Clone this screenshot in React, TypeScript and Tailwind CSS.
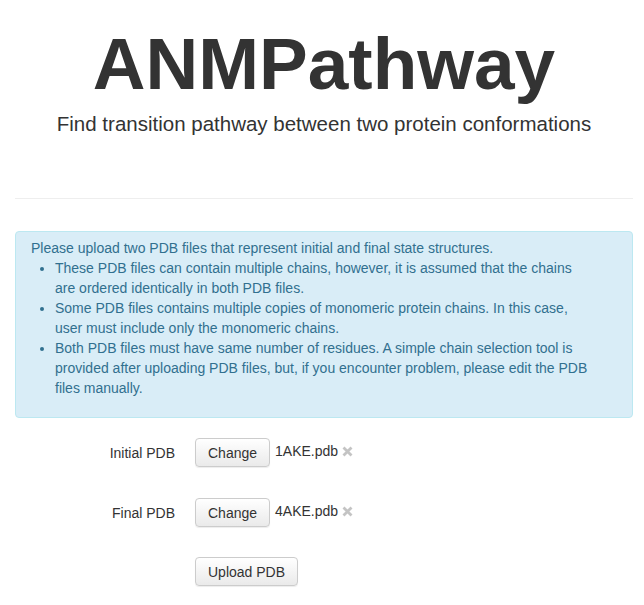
import React from "react";

function RemoveIcon() {
  return (
    <svg width="11" height="11" viewBox="0 0 11 11" className="shrink-0">
      <path d="M1.5 1.5 L9.5 9.5 M9.5 1.5 L1.5 9.5" stroke="#c4c4c4" strokeWidth="2.8" strokeLinecap="butt" />
    </svg>
  );
}

function Btn({ children }: { children: React.ReactNode }) {
  return (
    <button
      type="button"
      className="border border-[#cccccc] rounded-[4px] bg-gradient-to-b from-[#ffffff] to-[#eaeaea] px-[12px] pt-[4px] pb-[3px] text-[14px] leading-[20px] text-[#333333] shadow-[0_1px_1px_rgba(0,0,0,0.075)]"
    >
      {children}
    </button>
  );
}

function FileRow({ label, file }: { label: string; file: string }) {
  return (
    <div className="flex items-start">
      <div className="w-[160px] pt-[5px] text-right text-[14px] leading-[20px] text-[#333333]">{label}</div>
      <div className="ml-[20px] flex items-start">
        <Btn>Change</Btn>
        <span className="ml-[5px] pt-[3px] text-[14px] leading-[20px] text-[#333333]">{file}</span>
        <span className="ml-[4px] pt-[8px]">
          <RemoveIcon />
        </span>
      </div>
    </div>
  );
}

export default function App() {
  return (
    <div
      className="min-h-[605px] w-[644px] bg-white pl-[15px] pr-[11px] text-[#333333]"
      style={{ fontFamily: '"Liberation Sans", Arial, sans-serif' }}
    >
      <div className="pt-[28px] text-center">
        <h1 className="text-[73px] font-bold leading-[72px] text-[#333333]">ANMPathway</h1>
        <p className="mt-[9px] text-[20.5px] leading-[30px] text-[#333333]">
          Find transition pathway between two protein conformations
        </p>
      </div>
      <div className="mt-[59px] border-t border-[#eeeeee]" />
      <div className="mt-[32px] rounded-[4px] border border-[#bce8f1] bg-[#d9edf7] px-[15px] pt-[6px] pb-[19px] text-[14px] leading-[20px] text-[#31708f]">
        <div>Please upload two PDB files that represent initial and final state structures.</div>
        <ul className="list-disc pl-[24px]">
          <li>
            These PDB files can contain multiple chains, however, it is assumed that the chains
            <br />
            are ordered identically in both PDB files.
          </li>
          <li>
            Some PDB files contains multiple copies of monomeric protein chains. In this case,
            <br />
            user must include only the monomeric chains.
          </li>
          <li>
            Both PDB files must have same number of residues. A simple chain selection tool is
            <br />
            provided after uploading PDB files, but, if you encounter problem, please edit the PDB
            <br />
            files manually.
          </li>
        </ul>
      </div>
      <div className="mt-[20px]">
        <FileRow label="Initial PDB" file="1AKE.pdb" />
        <div className="mt-[31px]">
          <FileRow label="Final PDB" file="4AKE.pdb" />
        </div>
        <div className="mt-[30px] flex">
          <div className="ml-[180px]">
            <Btn>Upload PDB</Btn>
          </div>
        </div>
      </div>
    </div>
  );
}
